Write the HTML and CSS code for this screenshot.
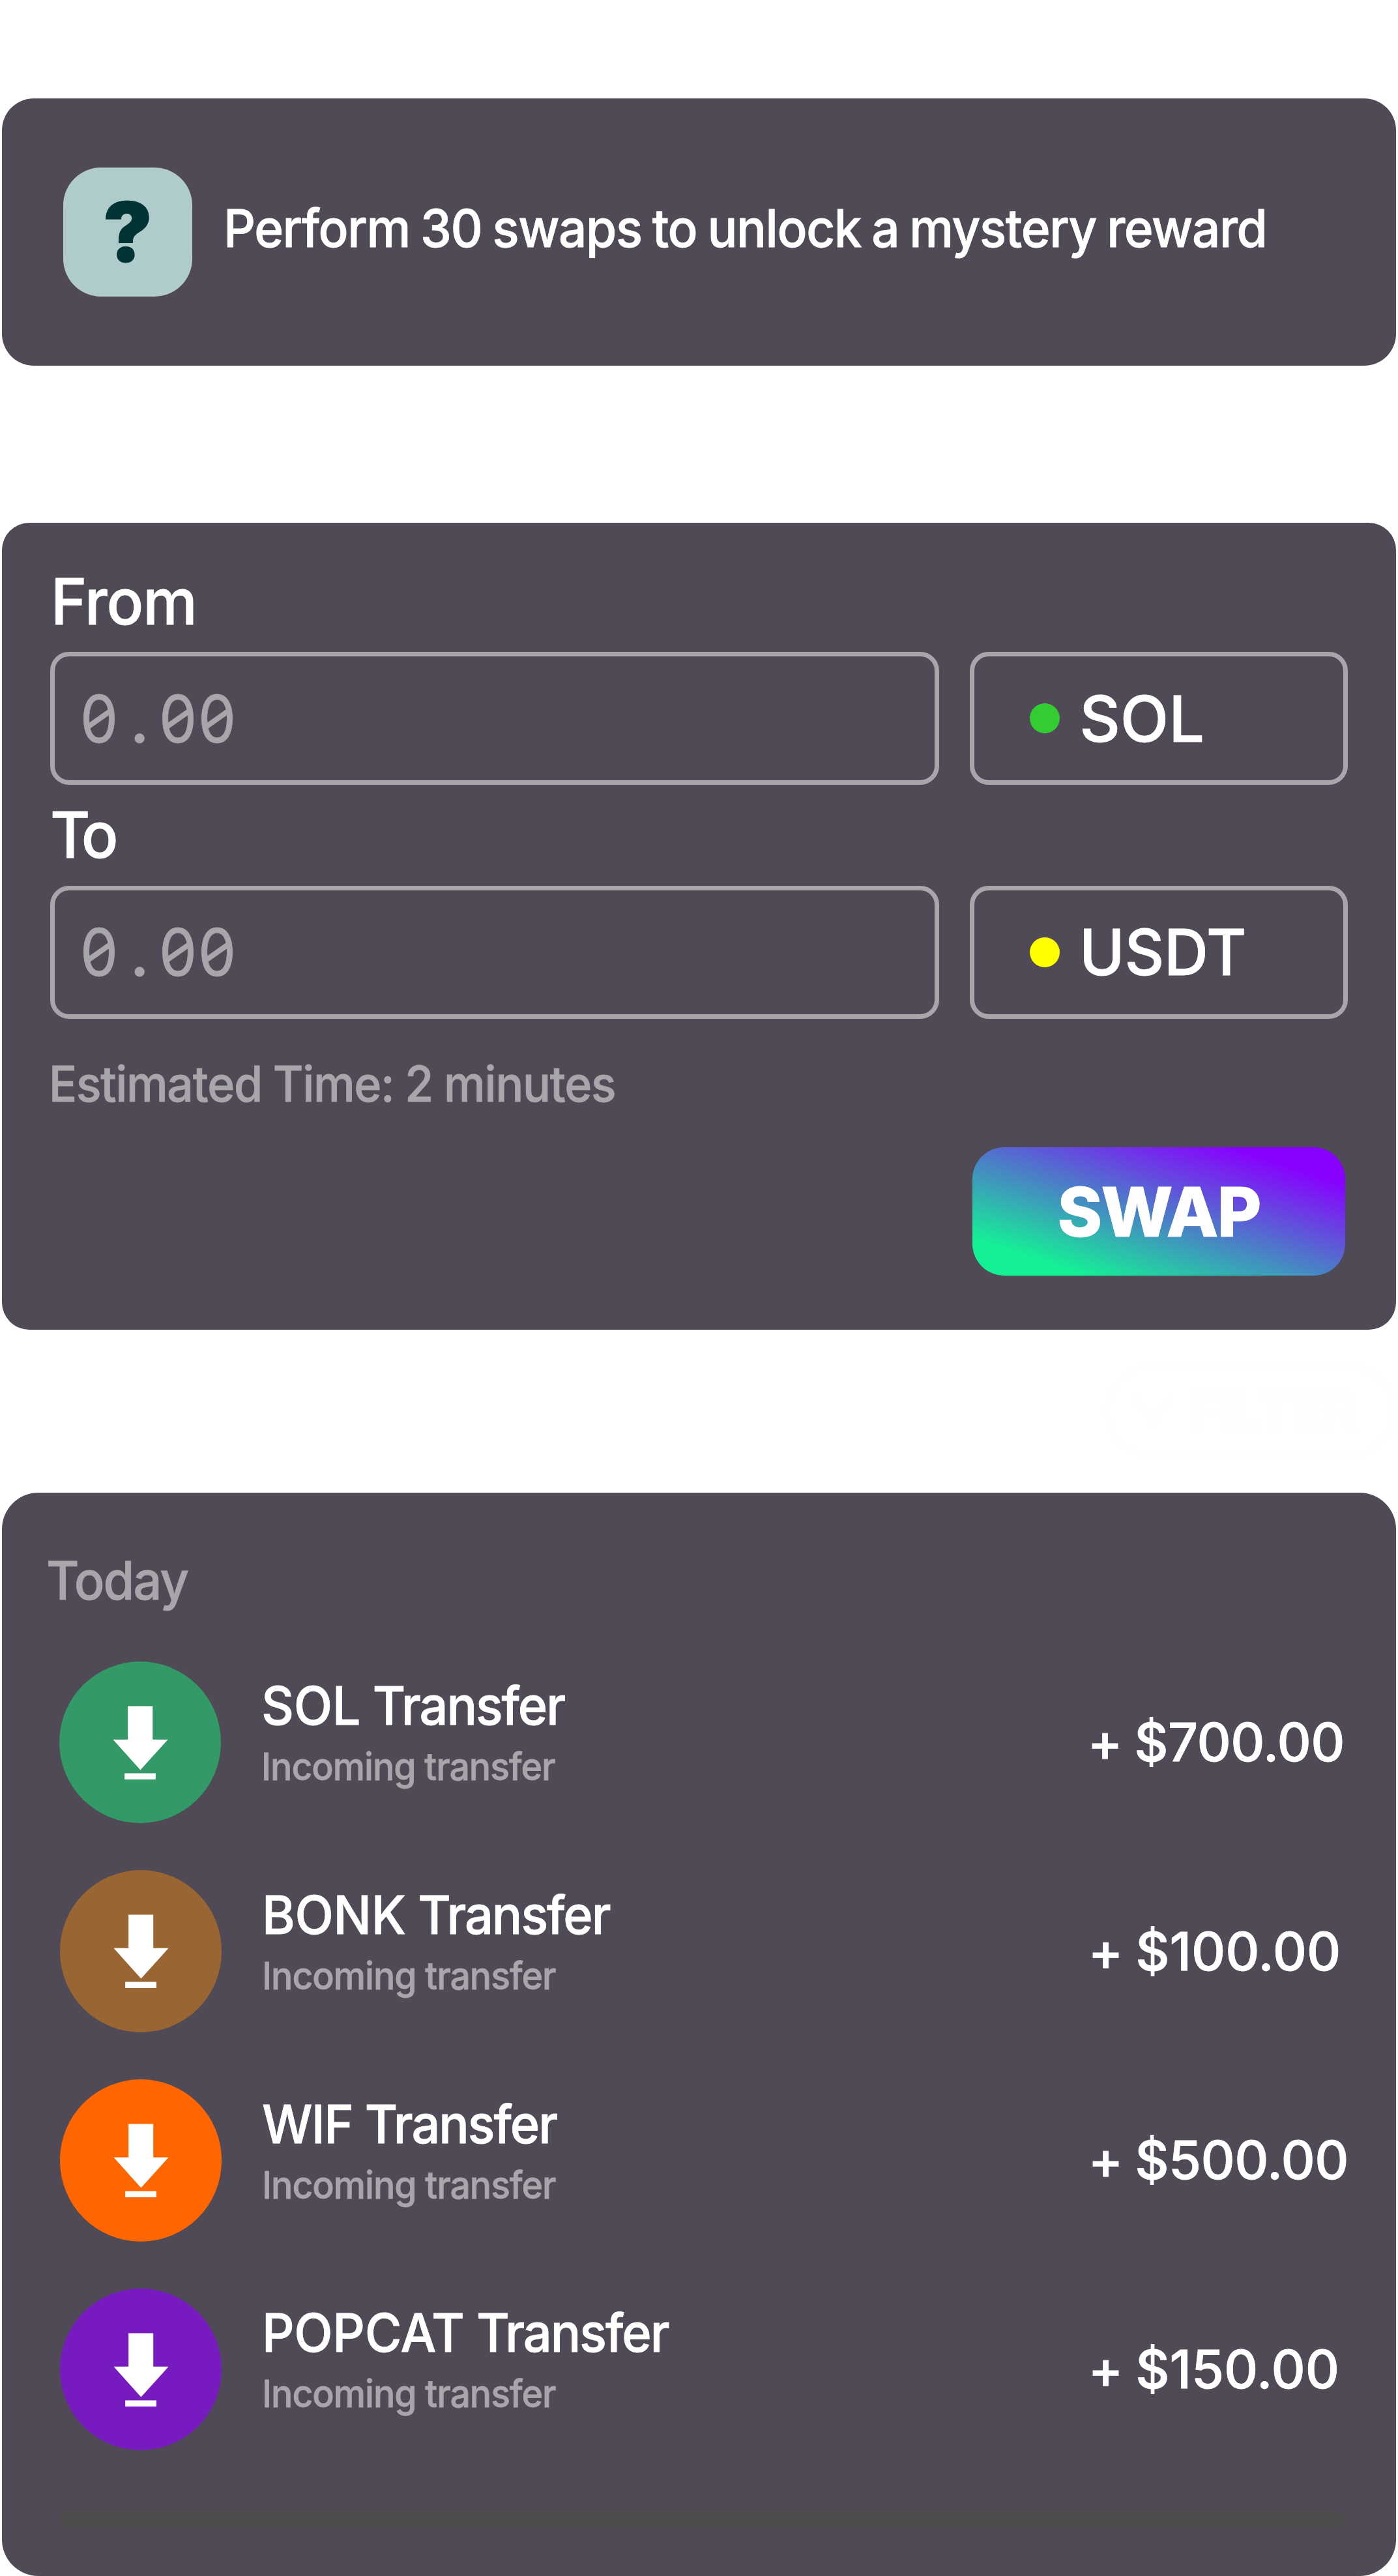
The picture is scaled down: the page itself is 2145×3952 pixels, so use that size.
FILE: index.html
```
<!DOCTYPE html>
<html lang="en">
<head>
<meta charset="utf-8">
<title>Swap</title>
<link rel="stylesheet" href="styles.css">
</head>
<body>
<svg width="0" height="0" class="defs" aria-hidden="true">
  <symbol id="download" viewBox="0 0 248 248">
    <path d="M105 68.3h38v51.3h23.3L124.2 166.3 82.3 119.6H105zM100 171.3h47.7v9.5H100z" fill="#fff"/>
  </symbol>
</svg>
<main class="page">
  <section class="card reward">
    <div class="reward-icon">?</div>
    <p class="reward-text">Perform 30 swaps to unlock a mystery reward</p>
  </section>

  <section class="card swap">
    <div class="label">From</div>
    <div class="field-row">
      <div class="field amount-input"><span class="mono"><span class="zero">0</span><span class="point">.</span><span class="zero">0</span><span class="zero">0</span></span></div>
      <div class="field token"><i class="dot green"></i><span>SOL</span></div>
    </div>
    <div class="label label-to">To</div>
    <div class="field-row">
      <div class="field amount-input"><span class="mono"><span class="zero">0</span><span class="point">.</span><span class="zero">0</span><span class="zero">0</span></span></div>
      <div class="field token"><i class="dot yellow"></i><span class="usdt">USDT</span></div>
    </div>
    <p class="estimate">Estimated Time: 2 minutes</p>
    <button class="swap-btn">SWAP</button>
  </section>

  <div class="filter">
    <svg width="62" height="46" viewBox="0 0 62 46"><path d="M3 3l28 37L59 3" fill="none" stroke="#fefefe" stroke-width="9"/></svg>
    <span>FILTER</span>
  </div>

  <section class="card history">
    <h2 class="day">Today</h2>
    <ul class="list">
      <li class="item first">
        <svg class="badge sol"><use href="#download"/></svg>
        <div class="info"><div class="name"><span class="ticker">SOL</span> Transfer</div><div class="sub">Incoming transfer</div></div>
        <div class="sum">+ $700.00</div>
      </li>
      <li class="item">
        <svg class="badge bonk"><use href="#download"/></svg>
        <div class="info"><div class="name"><span class="ticker">BONK</span> Transfer</div><div class="sub">Incoming transfer</div></div>
        <div class="sum loose">+ $100.00</div>
      </li>
      <li class="item">
        <svg class="badge wif"><use href="#download"/></svg>
        <div class="info"><div class="name"><span class="ticker tight">WIF</span> Transfer</div><div class="sub">Incoming transfer</div></div>
        <div class="sum">+ $500.00</div>
      </li>
      <li class="item">
        <svg class="badge popcat"><use href="#download"/></svg>
        <div class="info"><div class="name"><span class="ticker">POPCAT</span> Transfer</div><div class="sub">Incoming transfer</div></div>
        <div class="sum loose">+ $150.00</div>
      </li>
    </ul>
    <div class="divider"></div>
  </section>
</main>
</body>
</html>
```
FILE: styles.css
```
* { box-sizing: border-box; }

body {
  margin: 0;
  background: #fff;
  color: #fff;
  font-family: Inter, "Liberation Sans", sans-serif;
  font-weight: 500;
  -webkit-text-stroke: .8px currentColor;
  overflow: hidden;
}

p, h2, ul { margin: 0; padding: 0; }

.defs { display: block; }

.page {
  display: flex;
  flex-direction: column;
  height: 3952px;
  padding: 151px 3.4px 0;
}

.card {
  display: flex;
  flex-shrink: 0;
  background: #504a56;
}

/* Reward banner */
.reward {
  align-items: center;
  gap: 48.3px;
  height: 410px;
  padding-left: 93.6px;
  border-radius: 49px;
}

.reward-icon {
  display: flex;
  align-items: center;
  justify-content: center;
  width: 197.6px;
  height: 197.6px;
  border-radius: 58px;
  background: #b0cbcc;
  color: #033;
  font-size: 127px;
  font-weight: 900;
}

.reward-text {
  padding-bottom: 14px;
  font-size: 80px;
  letter-spacing: -1.47px;
  word-spacing: -3px;
  white-space: nowrap;
  transform: scaleX(.955);
  transform-origin: left;
}

/* Swap form */
.swap {
  flex-direction: column;
  height: 1237.3px;
  margin-top: 241.4px;
  padding: 60.3px 73.9px 0;
  border-radius: 42px;
}

.label {
  margin: 0 0 17.3px 1px;
  font-size: 97px;
  line-height: 120px;
  letter-spacing: -1.1px;
  transform: scaleX(.97);
  transform-origin: left;
}

.label-to {
  margin: 16.8px 0 17.3px;
  letter-spacing: -6.6px;
}

.field-row {
  display: flex;
  gap: 46.5px;
}

.field {
  display: flex;
  align-items: center;
  height: 204.5px;
  border: 7px solid #a8a5ab;
  border-radius: 29px;
  font-size: 97px;
}

.amount-input {
  width: 1364.2px;
  padding-left: 38.2px;
  color: #a8a5ab;
  font-size: 100px;
  font-weight: 400;
}

/* Fixed-pitch figures with a short slash inside each zero */
.mono {
  display: flex;
  font-kerning: none;
}

.zero,
.point {
  width: 60.2px;
  text-align: center;
}

.zero {
  position: relative;
  display: flex;
  justify-content: center;
  transform: scaleX(.92);
}

.zero::after {
  content: "";
  position: absolute;
  top: 56px;
  left: 13px;
  width: 34px;
  height: 9.5px;
  background: currentColor;
  transform: skewY(-33deg);
}

.point {
  padding-left: 3px;
  font-weight: 500;
}

.token {
  flex: 1;
  gap: 29.9px;
  padding-left: 84.8px;
}

.usdt {
  letter-spacing: -.2px;
  transform: scaleX(.97);
  transform-origin: left;
}

.dot {
  width: 46.5px;
  height: 46.5px;
  border-radius: 50%;
}

.green { background: #3c3; }
.yellow { background: #ff0; }

.estimate {
  margin: 54.7px 0 0 -2.3px;
  color: #a8a5ab;
  font-size: 75px;
  line-height: 90px;
  letter-spacing: -1.35px;
  word-spacing: -1px;
  transform: scaleX(.955);
  transform-origin: left;
}

.swap-btn {
  align-self: flex-end;
  width: 572px;
  height: 197px;
  margin: 52.3px 3.5px 0 0;
  padding: 0;
  border: 0;
  border-radius: 49px;
  background: linear-gradient(18deg, #14f195 14.4%, #80f 85.6%);
  color: #fff;
  font: 800 104px Inter, sans-serif;
  letter-spacing: -1.8px;
}

.filter {
  display: flex;
  flex-shrink: 0;
  align-self: flex-end;
  align-items: center;
  gap: 25px;
  width: 448px;
  height: 143px;
  margin: 53.3px -1.4px 54.3px 0;
  padding-left: 35px;
  border: 8px solid #fefefe;
  border-radius: 72px;
  color: #fefefe;
  font-size: 82px;
  font-weight: 700;
  letter-spacing: -2px;
}

/* History */
.history {
  flex-direction: column;
  height: 1661.7px;
  padding-top: 84.5px;
  border-radius: 56px;
}

.day {
  margin: 0 0 73.9px 67.6px;
  color: #a8a5ab;
  font-size: 81px;
  font-weight: 500;
  line-height: 100px;
  letter-spacing: -1.9px;
  transform: scaleX(.955);
  transform-origin: left;
}

.list {
  display: flex;
  flex-direction: column;
  gap: 72.4px;
  padding-left: 88.6px;
  list-style: none;
}

.item {
  display: flex;
  align-items: center;
  height: 248.4px;
}

.first { margin: 0 1px 0 -1px; }

.badge {
  flex: none;
  width: 248.4px;
  height: 248.4px;
  border-radius: 50%;
}

.sol { background: #396; }
.bonk { background: #963; }
.wif { background: #f60; }
.popcat { background: #771bc1; }

.info {
  align-self: flex-start;
  margin: 19.3px 0 0 61.2px;
  white-space: nowrap;
  transform: scaleX(.955);
  transform-origin: left;
}

.name {
  margin-bottom: 9.1px;
  font-size: 81px;
  line-height: 98px;
  letter-spacing: -2.1px;
}

.ticker { letter-spacing: -.3px; }
.ticker.tight { letter-spacing: -1.8px; }

.sub {
  color: #a8a5ab;
  font-size: 58px;
  line-height: 70px;
  letter-spacing: -1.05px;
}

.sum {
  width: 472px;
  margin-left: auto;
  font-size: 81px;
  letter-spacing: -.55px;
  word-spacing: -3px;
}

.loose { letter-spacing: -.05px; }

.divider {
  height: 25px;
  margin: 94px 76px 0 88.6px;
  border-radius: 12px;
  background: #4c4c4b;
}
```
